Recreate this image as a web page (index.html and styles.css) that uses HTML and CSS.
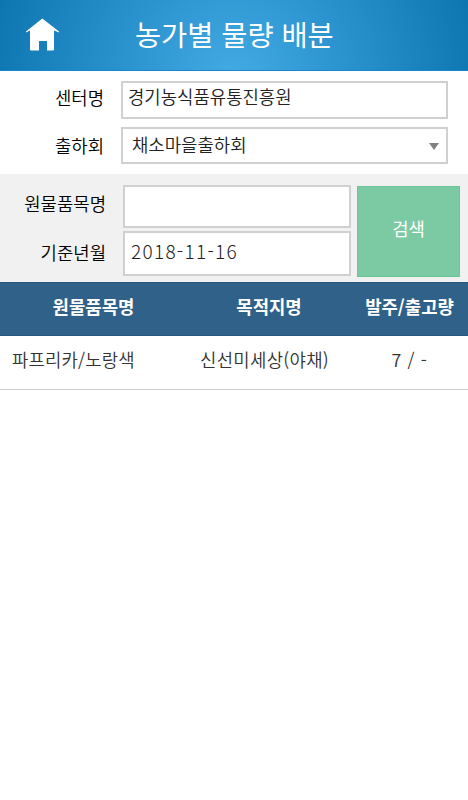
FILE: index.html
```html
<!DOCTYPE html>
<html lang="ko">
<head>
  <meta charset="UTF-8" />
  <meta name="viewport" content="width=device-width, initial-scale=1" />
  <title>농가별 물량 배분</title>
  <link rel="stylesheet" href="styles.css">
</head>
<body>
  <header class="header">
    <a class="home" href="#" aria-label="홈">
      <svg width="34" height="34" viewBox="0 0 34 34">
        <path d="M17.3 0.5 L34 13.5 V14.5 L29 12.5 V31.5 Q29 32.5 28 32.5 H22 V23 H14 V32.5 H6 Q5 32.5 5 31.5 V12.5 L1 14.5 V13.5 Z" fill="#fff" />
      </svg>
    </a>
    <h1>농가별 물량 배분</h1>
  </header>

  <!-- Center / group -->
  <section class="center-form">
    <div class="form-row">
      <label for="center">센터명</label>
      <input type="text" id="center" value="경기농식품유통진흥원" />
    </div>
    <div class="form-row group-row">
      <label for="group">출하회</label>
      <div class="select" id="group">
        <span>채소마을출하회</span>
        <i class="arrow"></i>
      </div>
    </div>
  </section>

  <!-- Search -->
  <form class="search-form">
    <div class="search-fields">
      <div class="search-row">
        <label for="item">원물품목명</label>
        <input type="text" id="item" />
      </div>
      <div class="search-row date-row">
        <label for="date">기준년월</label>
        <input type="text" id="date" value="2018-11-16" />
      </div>
    </div>
    <button type="button">검색</button>
  </form>

  <table class="list">
    <thead>
      <tr>
        <th class="col-item">원물품목명</th>
        <th class="col-dest">목적지명</th>
        <th class="col-qty">발주/출고량</th>
      </tr>
    </thead>
    <tbody>
      <tr>
        <td class="item">파프리카/노랑색</td>
        <td class="dest">신선미세상(야채)</td>
        <td class="qty">7 / -</td>
      </tr>
    </tbody>
  </table>
</body>
</html>
```
FILE: styles.css
```css
* {
  box-sizing: border-box;
}

body {
  margin: 0;
  background: #fff;
  color: #000;
  font-family: "Noto Sans CJK KR", sans-serif;
  font-size: 17.8px;
  font-weight: 350;
  line-height: 26px;
}

.header {
  display: flex;
  align-items: center;
  height: 71px;
  padding-left: 25px;
  border-bottom: 1px solid #1686cb;
  background: radial-gradient(circle 250px at 50% 110%, #43aae4, #0c75b0);
}

.home {
  width: 34px;
  height: 34px;
}

.header h1 {
  margin: 0 0 3px 76px;
  color: #fff;
  font-size: 28.4px;
  font-weight: 400;
  line-height: 42px;
  white-space: nowrap;
}

input,
.select {
  border: 2px solid #d0d0d0;
  background: #fff;
  color: #222;
  font-family: inherit;
  font-size: inherit;
  font-weight: inherit;
}

.center-form {
  height: 103px;
  padding: 10px 20px 0 0;
}

.form-row {
  display: flex;
  margin-bottom: 8px;
}

.form-row label {
  width: 104px;
  margin-right: 17px;
  padding-top: 3px;
  text-align: right;
}

.form-row.group-row label {
  padding-top: 5px;
}

.form-row input,
.select {
  flex: 1;
  height: 38px;
  min-width: 0;
  padding: 0 6px 8px 5px;
}

.form-row .select {
  display: flex;
  align-items: center;
  justify-content: space-between;
  height: 37px;
  padding: 0 7px 3px 9px;
}

.arrow {
  margin-top: 4px;
  border: 5.5px solid transparent;
  border-top: 7px solid #808080;
  border-bottom: 0;
}

.search-form {
  display: flex;
  height: 108px;
  padding: 11px 8px 0 0;
  background: #f1f1f1;
}

.search-fields {
  width: 351px;
}

.search-row {
  display: flex;
  margin-bottom: 3px;
}

.search-row label {
  width: 106px;
  margin-right: 17px;
  padding-top: 5px;
  text-align: right;
}

.search-row input {
  width: 228px;
  height: 43px;
  padding: 0 6px 4px;
}

.search-row.date-row label {
  padding-top: 8px;
}

.search-row.date-row input {
  height: 45px;
  padding: 0 6px 6px;
  font-size: 19px;
  font-weight: 300;
  letter-spacing: 1.3px;
}

.search-form button {
  width: 103px;
  height: 91px;
  margin: 1px 0 0 6px;
  padding: 0 0 7px;
  border: 1px solid #6ac697;
  background: #7ccaa4;
  color: #fff;
  font-family: inherit;
  font-size: 17.8px;
  font-weight: 400;
}

.list {
  width: 100%;
  border-collapse: collapse;
  table-layout: fixed;
}

.list th {
  height: 53px;
  padding: 0 0 6px;
  border-top: 1px solid #235781;
  border-bottom: 1px solid #235781;
  background: #306188;
  color: #fff;
  font-weight: 700;
}

.list td {
  height: 54px;
  padding: 0 0 8px;
  border-bottom: 1px solid #ccc;
  color: #333;
  text-align: center;
}

.col-item {
  width: 187px;
}

.col-dest {
  width: 164px;
}

.list .item {
  padding-left: 12px;
  letter-spacing: 0.15px;
  text-align: left;
}

.list .dest {
  padding-right: 9px;
  letter-spacing: 0.3px;
}

.list .qty {
  letter-spacing: 0.6px;
}
```
